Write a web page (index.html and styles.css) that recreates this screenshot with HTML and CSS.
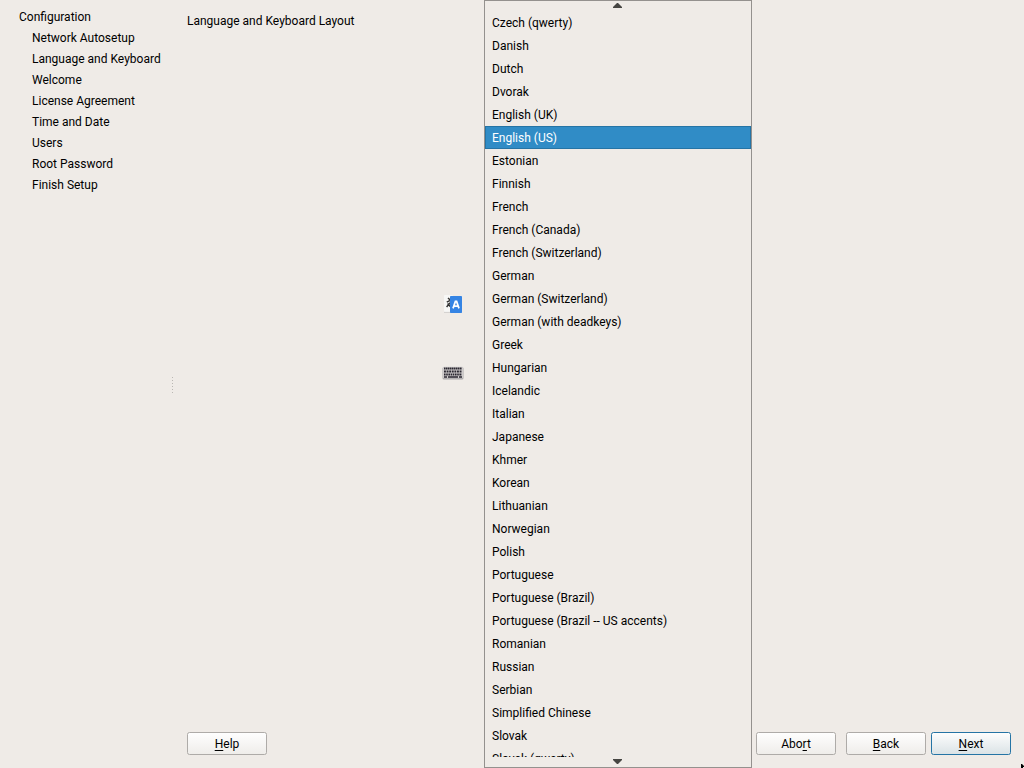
FILE: index.html
```
<!DOCTYPE html>
<html lang="en">
<head>
<meta charset="utf-8">
<title>Language and Keyboard Layout</title>
<link rel="stylesheet" href="styles.css">
</head>
<body>
<div class="window">
  <nav class="sidebar">
    <div class="heading">Configuration</div>
    <ul class="steps">
      <li>Network Autosetup</li><li>Language and Keyboard</li><li>Welcome</li><li>License Agreement</li><li>Time and Date</li><li>Users</li><li>Root Password</li><li>Finish Setup</li>
    </ul>
  </nav>
  <div class="splitter"><svg width="3" height="16" viewBox="0 0 3 16" shape-rendering="crispEdges"><path d="M1.5 0V16" stroke="#bab7b3" stroke-dasharray="1 2"/></svg></div>
  <main class="content">
    <h1>Language and Keyboard Layout</h1>
    <div class="icons">
      <svg width="20" height="20" viewBox="0 0 20 20">
        <rect x="1" y="1" width="9" height="17" rx="1" fill="#f7f7f6"/>
        <path d="M1 18.4H19" stroke="#c9c8c6" stroke-width=".8"/>
        <path d="M5 4L7.2 6M3.8 8.2L7.2 6.4M3.6 13L7.2 8.6M4.6 9.4L7.2 12.4" stroke="#333" stroke-width="1.5" fill="none"/>
        <rect x="7" y="2" width="12" height="17" rx=".8" fill="#3584e4"/>
        <path d="M10 14.4L12.4 7.4H13.6L16 14.4M11 12.2H15" stroke="#fff" stroke-width="1.7" fill="none"/>
      </svg>
      <svg width="22" height="14" viewBox="0 0 22 14">
        <rect x=".5" y="1" width="21" height="12.4" rx="1.5" fill="#aaa7a9"/>
        <rect x="1" y=".8" width="20" height="11.4" rx="1" fill="#d0cdcd"/>
        <g stroke="#292630" stroke-width="2">
          <path d="M2 2.5H20" stroke-dasharray="1.6 .4"/>
          <path d="M2 5.5H20" stroke-dasharray="1.9 .7"/>
          <path d="M2 8.5H20" stroke-dasharray="1.6 .6"/>
          <path d="M2 11H5M6 11H16M17 11H20" stroke-width="1.6"/>
        </g>
      </svg>
    </div>
    <footer class="buttons">
      <button class="help"><u>H</u>elp</button>
      <button class="abort">Abo<u>r</u>t</button>
      <button class="back"><u>B</u>ack</button>
      <button class="next"><u>N</u>ext</button>
    </footer>
  </main>
  <div class="popup">
    <div class="scroller"><svg width="9" height="5" viewBox="0 0 9 5"><path d="M0 5V4L4 0H5L9 4V5Z" fill="#464542"/></svg></div>
    <ul class="options">
      <li>Czech (qwerty)</li><li>Danish</li><li>Dutch</li><li>Dvorak</li><li>English (UK)</li><li class="selected">English (US)</li><li>Estonian</li><li>Finnish</li><li>French</li><li>French (Canada)</li><li>French (Switzerland)</li><li>German</li><li>German (Switzerland)</li><li>German (with deadkeys)</li><li>Greek</li><li>Hungarian</li><li>Icelandic</li><li>Italian</li><li>Japanese</li><li>Khmer</li><li>Korean</li><li>Lithuanian</li><li>Norwegian</li><li>Polish</li><li>Portuguese</li><li>Portuguese (Brazil)</li><li>Portuguese (Brazil -- US accents)</li><li>Romanian</li><li>Russian</li><li>Serbian</li><li>Simplified Chinese</li><li>Slovak</li><li>Slovak (qwerty)</li>
    </ul>
    <div class="scroller"><svg width="9" height="5" viewBox="0 0 9 5"><path d="M0 0V1L4 5H5L9 1V0Z" fill="#464542"/></svg></div>
  </div>
  <svg class="pointer" width="3" height="4" viewBox="0 0 3 4"><path d="M0 0H1L3 2V3H2V4H0Z" fill="#000"/></svg>
</div>
</body>
</html>
```
FILE: styles.css
```
* { box-sizing: border-box; }
body { margin: 0; background: #efebe7; color: #000; font: 12px/21px Roboto, sans-serif; }
ul { list-style: none; margin: 0; padding: 0; }
.window { position: relative; display: flex; width: 1024px; height: 768px; overflow: hidden; }
.sidebar { width: 171px; padding: 7px 0 0 19px; white-space: nowrap; }
.steps { padding-left: 13px; }
.splitter { width: 3px; padding-top: 377px; line-height: 0; }
.content { flex: 1; display: flex; flex-direction: column; padding: 11px 13px 13px; }
h1 { margin: 0; font-size: 12px; font-weight: 400; line-height: 21px; }
.icons { flex: 1; display: flex; flex-direction: column; align-items: center; gap: 52px; width: 532px; padding-top: 262px; }
.buttons { display: flex; }
button { width: 80px; height: 23px; padding: 1px 0 0; border: 1px solid #aeaba8; border-radius: 2.5px; background: linear-gradient(#fefefe, #efedea); color: #000; font: 12px/20px Roboto, sans-serif; }
u { text-decoration-thickness: 1px; text-underline-offset: 2px; text-decoration-skip-ink: none; }
.abort { margin-left: auto; }
.back { margin: 0 5px 0 10px; }
.next { border-color: #2574a5; background: linear-gradient(#fdfdfd, #dbe3e6); }
.popup { position: absolute; top: 0; left: 484px; display: flex; flex-direction: column; width: 268px; height: 768px; border: 1px solid #94918e; background: #efebe7; }
.scroller { display: flex; flex: 0 0 10px; align-items: flex-start; justify-content: center; padding: 2px 1px 0 0; }
.options { flex: 1; min-height: 0; overflow: hidden; }
.options li { height: 23px; padding: 1px 0 0 7px; line-height: 23px; white-space: nowrap; }
.options .selected { padding-left: 6px; border: 1px solid #2574a5; background: #308cc6; color: #fff; line-height: 21px; }
.pointer { position: absolute; right: 0; bottom: 0; }
```
